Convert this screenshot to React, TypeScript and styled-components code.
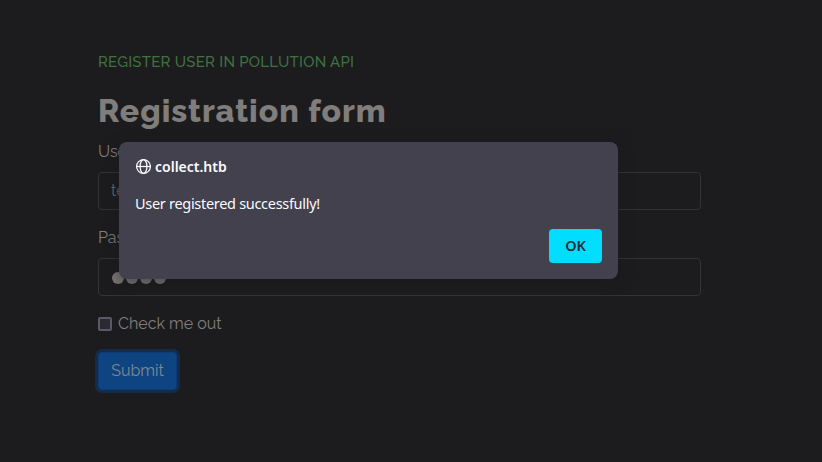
import React from "react";
import styled, { createGlobalStyle } from "styled-components";

const GlobalStyle = createGlobalStyle`
  *, *::before, *::after { box-sizing: border-box; }
  body { margin: 0; background: #1c1c1e; overflow: hidden; }
`;

const Page = styled.main`
  position: relative;
  width: 822px;
  height: 462px;
  padding: 51px 121px 0 98px;
  background: #1c1c1e;
  color: #807e7c;
  font: 400 16px/24px Raleway, Lato, sans-serif;
`;

const Eyebrow = styled.p`
  margin: 0;
  height: 22px;
  color: #3f7141;
  font-size: 15px;
  font-weight: 500;
  line-height: 22px;
  white-space: nowrap;
  letter-spacing: 0.26px;
`;

const Title = styled.h1`
  margin: 18px 0 9px;
  height: 40px;
  font-size: 32px;
  font-weight: 800;
  line-height: 40px;
  letter-spacing: 1px;
  white-space: nowrap;
`;

const Field = styled.div`
  display: flex;
  flex-direction: column;
  gap: 8px;
  height: 70px;
  margin-bottom: 16px;
`;

const Label = styled.label`
  height: 24px;
  line-height: 24px;
`;

const Input = styled.div`
  display: flex;
  align-items: center;
  height: 38px;
  padding: 0 12px;
  border: 1px solid #333236;
  border-radius: 4px;
  color: #666769;
`;

const Dots = styled.span`
  display: flex;
  gap: 2px;
  padding: 2px 0 0 1px;
`;

const Dot = styled.span`
  width: 12px;
  height: 12px;
  border-radius: 50%;
  background: #777472;
`;

const CheckRow = styled.label`
  display: flex;
  align-items: center;
  gap: 6px;
  height: 24px;
`;

const Box = styled.span`
  width: 14px;
  height: 14px;
  border: 2px solid #5b5965;
  border-radius: 2px;
  background: #2b2a33;
`;

const Submit = styled.button`
  display: block;
  width: 79px;
  height: 38px;
  margin: 16px 0 0;
  padding: 0;
  border: 1px solid #0c3d78;
  border-radius: 4px;
  background: #0f4482;
  box-shadow: 0 0 0 3px #142c49;
  color: #808890;
  font: inherit;
`;

const Dialog = styled.section`
  position: absolute;
  left: 119px;
  top: 142px;
  width: 499px;
  height: 137px;
  padding: 16px;
  border-radius: 8px;
  background: #42414d;
  box-shadow: 0 2px 14px rgba(24, 22, 27, 0.5);
  color: #fbfbfe;
  font: 400 14.5px/20px "Noto Sans", sans-serif;
`;

const Origin = styled.header`
  display: flex;
  align-items: center;
  gap: 4px;
  height: 18px;
  font-size: 14px;
  font-weight: 600;
`;

const Message = styled.p`
  margin: 17px 0 16px;
  height: 20px;
  letter-spacing: -0.3px;
  white-space: nowrap;
`;

const Actions = styled.footer`
  display: flex;
  justify-content: flex-end;
`;

const OkButton = styled.button`
  width: 53px;
  height: 34px;
  padding: 0 0 2px;
  border: 0;
  border-radius: 4px;
  background: #00ddff;
  color: #2b2a33;
  font: 600 14.5px/20px "Noto Sans", sans-serif;
  letter-spacing: -0.2px;
`;

const GlobeIcon = () => (
  <svg width="16" height="16" viewBox="0 0 16 16" fill="none" stroke="currentColor" strokeWidth="1.25">
    <circle cx="8.5" cy="7.5" r="6.9" />
    <ellipse cx="8.5" cy="7.5" rx="3.4" ry="6.9" />
    <path d="M1.5 7.5h14" />
  </svg>
);

export default function App() {
  return (
    <>
      <GlobalStyle />
      <Page>
        <Eyebrow>REGISTER USER IN POLLUTION API</Eyebrow>
        <Title>Registration form</Title>
        <Field>
          <Label>Username</Label>
          <Input>test</Input>
        </Field>
        <Field>
          <Label>Password</Label>
          <Input><Dots><Dot /><Dot /><Dot /><Dot /></Dots></Input>
        </Field>
        <CheckRow><Box />Check me out</CheckRow>
        <Submit type="button">Submit</Submit>
        <Dialog role="alertdialog">
          <Origin><GlobeIcon />collect.htb</Origin>
          <Message>User registered successfully!</Message>
          <Actions><OkButton type="button">OK</OkButton></Actions>
        </Dialog>
      </Page>
    </>
  );
}
